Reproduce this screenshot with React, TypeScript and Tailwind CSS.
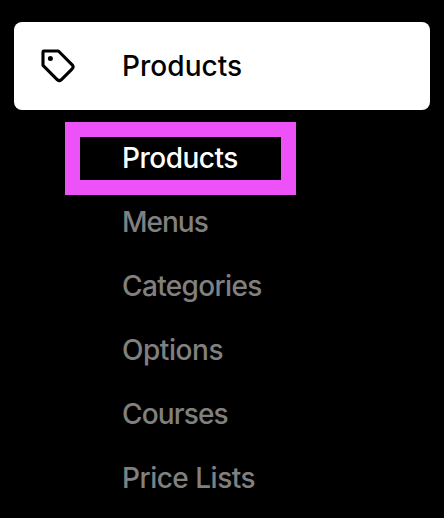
const subItems = [
  { name: 'Products', active: true, textClass: 'tracking-[-0.5px]' },
  { name: 'Menus', active: false, textClass: 'tracking-[-1px]' },
  { name: 'Categories', active: false, textClass: 'tracking-[-0.65px]' },
  { name: 'Options', active: false, textClass: 'tracking-[-0.45px]' },
  { name: 'Courses', active: false, textClass: 'tracking-[-0.85px]' },
  { name: 'Price Lists', active: false, textClass: 'tracking-[-0.5px]' },
];

function TagIcon() {
  return (
    <svg width="36" height="36" viewBox="0 0 36 36" fill="none" className="shrink-0">
      <path
        d="M3.8 3H18.4L32.2 16.8Q34 18.8 32.2 20.8L21.2 31.8Q19.3 33.4 17.4 31.8L3 17.4V3.8Q3 3 3.8 3Z"
        stroke="black"
        strokeWidth="3.1"
        strokeLinejoin="round"
      />
      <circle cx="10.4" cy="10.4" r="2.5" fill="black" />
    </svg>
  );
}

export default function App() {
  return (
    <nav className="h-[518px] w-[444px] overflow-hidden bg-black px-3.5 pt-[22px] font-['Inter',sans-serif] text-[28px]">
      <div className="flex h-[88px] items-center rounded-lg bg-white pl-[26px] text-black">
        <TagIcon />
        <span className="ml-[46px] font-medium tracking-[0.05px]">Products</span>
      </div>

      <ul className="pt-4 font-[450]">
        {subItems.map((item) => (
          <li
            key={item.name}
            className={`relative flex h-16 items-center pl-[108px] ${item.active ? 'text-white' : 'text-[#808080]'}`}
          >
            {item.active && (
              <div className="absolute -top-1 left-[51px] h-[73px] w-[231px] border-[15px] border-[#ec52f8]" />
            )}
            <span className={item.textClass}>{item.name}</span>
          </li>
        ))}
      </ul>
    </nav>
  );
}
